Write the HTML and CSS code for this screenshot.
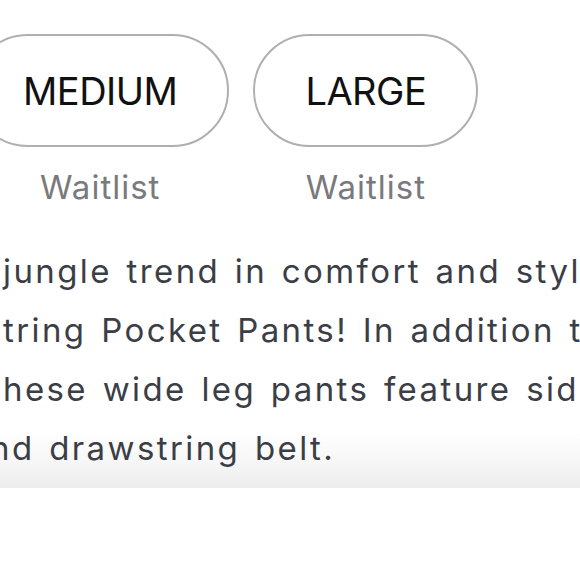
FILE: index.html
```html
<!DOCTYPE html>
<html lang="en">
<head>
<meta charset="utf-8">
<title>Sizes</title>
<link rel="stylesheet" href="styles.css">
</head>
<body>
<section class="card">
  <div class="sizes">
    <div class="size">
      <button class="size-btn">MEDIUM</button>
      <span class="status">Waitlist</span>
    </div>
    <div class="size">
      <button class="size-btn">LARGE</button>
      <span class="status">Waitlist</span>
    </div>
  </div>
  <div class="desc">
    <div class="line l1">jungle trend in comfort and style with</div>
    <div class="line l2">tring Pocket Pants! In addition to the</div>
    <div class="line l3">hese wide leg pants feature side pockets</div>
    <div class="line l4">nd drawstring belt.</div>
  </div>
</section>
</body>
</html>
```

FILE: styles.css
```css
html, body {
  margin: 0;
  padding: 0;
  background: #ffffff;
  overflow: hidden;
  font-family: Inter, "Noto Sans", sans-serif;
}

.card {
  height: 488px;
  box-sizing: border-box;
  padding-top: 34px;
  overflow: hidden;
  background: linear-gradient(to bottom, #ffffff 0, #ffffff calc(100% - 58px), #f6f6f6 calc(100% - 25px), #ececec 100%);
}

.sizes {
  display: flex;
  gap: 24px;
  margin-left: -29px;
}

.size {
  display: flex;
  flex-direction: column;
  align-items: center;
}

.size-btn {
  height: 113px;
  padding: 0 50px;
  border: 2px solid #aeaeb3;
  border-radius: 57px;
  background: #ffffff;
  font-family: inherit;
  font-size: 38px;
  font-weight: 400;
  color: #111111;
  display: flex;
  align-items: center;
  justify-content: center;
  letter-spacing: -0.5px;
}

.status {
  margin-top: 20px;
  font-size: 33px;
  line-height: 40px;
  letter-spacing: 1px;
  color: #7a7a7c;
}

.desc {
  margin-top: 35px;
  font-size: 33px;
  line-height: 59px;
  letter-spacing: 2.4px;
  word-spacing: 3px;
  color: #3b3e46;
  white-space: nowrap;
}

.line {
  padding-left: 3px;
}

.l4 {
  padding-left: 0;
  margin-left: -10px;
}
```
